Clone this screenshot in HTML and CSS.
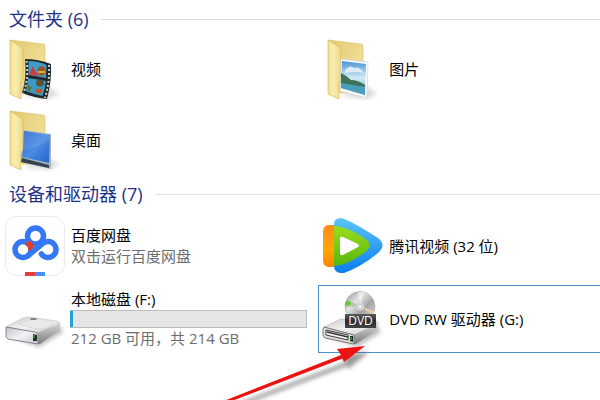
FILE: index.html
```html
<!DOCTYPE html>
<html lang="zh-CN">
<head>
  <meta charset="UTF-8">
  <title>这台电脑</title>
  <meta name="viewport" content="width=device-width, initial-scale=1.0">
  <link rel="stylesheet" href="styles.css">
</head>
<body>
  <!-- Shared gradients and the empty folder -->
  <svg class="defs" aria-hidden="true">
    <defs>
      <linearGradient id="flap" x1="0" y1="0" x2="1" y2="0">
        <stop offset="0" stop-color="#f1df8d"/>
        <stop offset="0.4" stop-color="#f9eeb2"/>
        <stop offset="1" stop-color="#ecd683"/>
      </linearGradient>
      <linearGradient id="back" x1="0" y1="0" x2="1" y2="1">
        <stop offset="0" stop-color="#e3c96f"/>
        <stop offset="1" stop-color="#f6e8aa"/>
      </linearGradient>
      <linearGradient id="sky" x1="0" y1="0" x2="0" y2="1">
        <stop offset="0" stop-color="#4a93d4"/>
        <stop offset="0.5" stop-color="#d3eaf5"/>
        <stop offset="1" stop-color="#57aacb"/>
      </linearGradient>
      <linearGradient id="screen" x1="0" y1="0" x2="1" y2="1">
        <stop offset="0" stop-color="#2d67c9"/>
        <stop offset="0.5" stop-color="#4a8be6"/>
        <stop offset="1" stop-color="#2463c4"/>
      </linearGradient>
      <linearGradient id="metalTop" x1="0" y1="0" x2="1" y2="1">
        <stop offset="0" stop-color="#c9c9c9"/>
        <stop offset="0.5" stop-color="#f3f3f3"/>
        <stop offset="1" stop-color="#c4c4c4"/>
      </linearGradient>
      <linearGradient id="metalSide" x1="0" y1="0" x2="0" y2="1">
        <stop offset="0" stop-color="#d8d8d8"/>
        <stop offset="1" stop-color="#7c7c7c"/>
      </linearGradient>
      <linearGradient id="metalFront" x1="0" y1="0" x2="1" y2="1">
        <stop offset="0" stop-color="#c2c3c8"/>
        <stop offset="0.5" stop-color="#f2f2f7"/>
        <stop offset="1" stop-color="#c5c5cf"/>
      </linearGradient>
      <linearGradient id="disc" x1="0" y1="0" x2="1" y2="1">
        <stop offset="0" stop-color="#8f8f8f"/>
        <stop offset="0.35" stop-color="#e4e4e4"/>
        <stop offset="0.6" stop-color="#a5a5a5"/>
        <stop offset="1" stop-color="#dddddd"/>
      </linearGradient>
      <linearGradient id="dvdLabel" x1="0" y1="0" x2="0" y2="1">
        <stop offset="0" stop-color="#5c5c5c"/>
        <stop offset="0.5" stop-color="#2c2c2c"/>
        <stop offset="1" stop-color="#444444"/>
      </linearGradient>
      <linearGradient id="playBlue" x1="0" y1="0" x2="0" y2="1">
        <stop offset="0" stop-color="#5cc4f5"/>
        <stop offset="1" stop-color="#0b7df0"/>
      </linearGradient>
      <linearGradient id="playGreen" x1="0" y1="0" x2="0" y2="1">
        <stop offset="0" stop-color="#9bdc1d"/>
        <stop offset="1" stop-color="#55b80c"/>
      </linearGradient>
      <linearGradient id="playOrange" x1="0" y1="0" x2="0" y2="1">
        <stop offset="0" stop-color="#ff8a1c"/>
        <stop offset="0.6" stop-color="#ffa600"/>
        <stop offset="1" stop-color="#ff8200"/>
      </linearGradient>
      <filter id="soft" x="-30%" y="-30%" width="160%" height="160%">
        <feGaussianBlur stdDeviation="2"/>
      </filter>
      <g id="folder">
        <path d="M20 59 L46 62 L56 57 L44 48 Z" fill="#888" opacity="0.3" filter="url(#soft)"/>
        <path d="M7 3 L40 7 Q42 7 42 9 L42 56 L19 56 Z" fill="url(#back)" stroke="#d9bf66" stroke-width="0.6"/>
        <path d="M7 3 L18 10 Q20 11 20 13 L20 42 L18 45 L18 62 L7 57 Z" fill="url(#flap)" stroke="#d2b658" stroke-width="0.6"/>
      </g>
    </defs>
  </svg>

  <section class="group">
    <h2 class="group-title">文件夹 (6)</h2>
    <ul class="tiles folders">
      <li class="tile">
        <svg class="icon" viewBox="0 0 64 64" aria-hidden="true">
          <use href="#folder"/>
          <path d="M22 22 Q35 22 48 27 Q49 43 44 62 Q32 61 19 56 Q24 40 22 22 Z" fill="#20282a"/>
          <path d="M25.500 24 Q35 24 43.500 28 L43 41 L25.500 38 Z" fill="#3f9ccb"/>
          <path d="M25 41 L43 44 Q42 52 39.500 59 Q30 57 22.500 54 Q25 47 25 41 Z" fill="#3c9ac9"/>
          <path d="M26 38 L28 33 L30 29 L32 34 L34 36 L35 39 Z" fill="#c9403a"/>
          <ellipse cx="38.500" cy="34" rx="4" ry="5" fill="#8f5a26"/>
          <path d="M35 34 H42 V36 H35 Z" fill="#e0a93a"/>
          <ellipse cx="37" cy="46" rx="4" ry="3.500" fill="#5e5230"/>
          <ellipse cx="36" cy="54" rx="3.500" ry="2.500" fill="#bd5a2d"/>
          <path d="M25 48 L29 50 L27 54 L24 53 Z" fill="#5a7a32"/>
          <path d="M23.500 24 Q26 40 20.500 56" fill="none" stroke="#c9d3cf" stroke-width="2" stroke-dasharray="2 2"/>
          <path d="M46 28 Q47 44 42 61" fill="none" stroke="#c9d3cf" stroke-width="2" stroke-dasharray="2 2"/>
        </svg>
        <span class="name">视频</span>
      </li>
      <li class="tile">
        <svg class="icon" viewBox="0 0 64 64" aria-hidden="true">
          <use href="#folder"/>
          <path d="M20 22 L47 25 L46 61 L19 54 Z" fill="#f8fbfd" stroke="#c3cbd0" stroke-width="0.6"/>
          <path d="M21 24 L45 27 L44 58 L20 51 Z" fill="url(#sky)"/>
          <path d="M24 33 Q29 27 33 31 Q38 29 43 36 Q35 34 24 36 Z" fill="#edf6fa" opacity="0.8"/>
          <path d="M20 36 Q26 39 30 43 Q37 43 44 48 L44 50 L20 47 Z" fill="#3d7457"/>
          <path d="M20 46 L44 50 L44 58 L20 51 Z" fill="#4b9dbe"/>
        </svg>
        <span class="name">图片</span>
      </li>
      <li class="tile">
        <svg class="icon" viewBox="0 0 64 64" aria-hidden="true">
          <use href="#folder"/>
          <path d="M20 22 L48 26 L48 61 L18 54 L18 45 L20 42 Z" fill="#a4b4bf"/>
          <path d="M21 23 L47 27 L46 55 L19 49 L20 42 Z" fill="url(#screen)"/>
          <path d="M19 50 L46 57 L46 60 L18 54 Z" fill="#344250"/>
          <path d="M21 23 L47 27 L47 32 Q34 40 20 42 Z" fill="#ffffff" opacity="0.1"/>
        </svg>
        <span class="name">桌面</span>
      </li>
    </ul>
  </section>

  <section class="group">
    <h2 class="group-title">设备和驱动器 (7)</h2>
    <ul class="tiles drives">
      <li class="tile">
        <svg class="icon" viewBox="0 0 64 64" aria-hidden="true">
          <rect x="2.500" y="2.500" width="59" height="59" rx="11" fill="#ffffff" stroke="#ebebeb"/>
          <g fill="none" stroke="#3478f6" stroke-width="5.500" stroke-linecap="round">
            <circle cx="20" cy="35.500" r="8"/>
            <path d="M23 28 A8 8 0 0 1 28 37" stroke="#d9402f" stroke-width="6" stroke-linecap="butt"/>
            <path d="M25.100 41.600 L39.900 29.400 A8 8 0 1 1 38.400 40"/>
            <circle cx="32.500" cy="22" r="8"/>
            <path d="M26 27.500 L29.500 33" stroke="#d9402f" stroke-width="4" stroke-linecap="butt"/>
          </g>
          <rect x="22" y="58" width="10" height="4" fill="#e23d36"/>
          <rect x="32" y="58" width="10" height="4" fill="#4b8df8"/>
        </svg>
        <div class="info">
          <span class="name">百度网盘</span>
          <span class="detail">双击运行百度网盘</span>
        </div>
      </li>
      <li class="tile">
        <svg class="icon" viewBox="0 0 64 64" aria-hidden="true">
          <path d="M13 11 L8 11 Q2 11 2 18 L2 46 Q2 53 8 53 L13 53 Z" fill="url(#playOrange)"/>
          <path d="M13 10 Q13 4 20 4 Q29 6 57 24 Q66 31 57 39 Q40 53 23 59 Q13 60 13 52 Z" fill="url(#playBlue)"/>
          <path d="M13 12 Q25 12 43 24 Q54 31 43 39 Q27 51 13 52 Z" fill="url(#playGreen)"/>
          <path d="M19 24 Q19 22 22 23 L37 30 Q39 32 37 33 L22 41 Q19 42 19 39 Z" fill="#ffffff"/>
        </svg>
        <span class="name">腾讯视频 (32 位)</span>
      </li>
      <li class="tile">
        <svg class="icon" viewBox="0 0 64 64" aria-hidden="true">
          <path d="M8 50 L36 60 L60 45 L54 36 Z" fill="#777" opacity="0.5" filter="url(#soft)"/>
          <path d="M3 40 L20 31 Q22 30 25 30 L53 34 Q57 35 57 37 L36 46 Z" fill="url(#metalTop)" stroke="#bdbdbd" stroke-width="0.6"/>
          <path d="M34 46 L57 36 L57 43 L37 57 L34 57 Z" fill="url(#metalSide)"/>
          <path d="M16 37 Q24 32 37 32 Q51 33 49 37 Q46 42 34 42 Z" fill="#e9e9e9" stroke="#cfcfcf" stroke-width="0.6"/>
          <path d="M28 31 L34 31 L33 33 L27 33 Z" fill="#858585"/>
          <path d="M3 40 L32 45 Q35 46 35 48 L35 57 L5 52 Q3 51 3 49 Z" fill="url(#metalFront)" stroke="#858585" stroke-width="1"/>
          <path d="M30 47 L34 48 L34 54 L30 54 Z" fill="#16351c"/>
          <path d="M31 48 V51" stroke="#55b945"/>
        </svg>
        <div class="info">
          <span class="name">本地磁盘 (F:)</span>
          <div class="usage"><div class="usage-fill" style="width: 1%"></div></div>
          <span class="detail">212 GB 可用，共 214 GB</span>
        </div>
      </li>
      <li class="tile selected">
        <svg class="icon" viewBox="0 0 64 64" aria-hidden="true">
          <path d="M8 50 L36 60 L60 45 L54 36 Z" fill="#777" opacity="0.5" filter="url(#soft)"/>
          <path d="M3 40 L20 32 L55 34 Q58 35 57 37 L34 48 Z" fill="url(#metalTop)" stroke="#a9a9a9" stroke-width="0.6"/>
          <path d="M33 48 L57 36 L56 43 L35 57 L33 57 Z" fill="url(#metalSide)"/>
          <path d="M3 40 L33 48 L33 57 L4 51 Q2 50 2 48 L2 42 Z" fill="#dedede" stroke="#777" stroke-width="1"/>
          <path d="M5 43 L27 48 L27 53 L5 48 Z" fill="#f7f7f7" stroke="#3b3b3b" stroke-width="1"/>
          <path d="M6 45 L27 50" stroke="#333" stroke-width="1.500"/>
          <path d="M29 49 L32 49 L32 55 L29 54 Z" fill="#16351c"/>
          <path d="M30 50 V53" stroke="#55b945"/>
          <circle cx="39" cy="19.500" r="15" fill="url(#disc)" stroke="#a3a3a3" stroke-width="0.6"/>
          <path d="M39 19.500 L26 12 Q24 16 24 20 Z" fill="#b4c9ac"/>
          <path d="M30 16 L26 13 Q24 15 24 19 L29 18 Z" fill="#69c832"/>
          <path d="M39 19.500 L53 24 L53 29 Z" fill="#e8cda5"/>
          <path d="M39 19.500 L37 5 L43 5 Z" fill="#f7f7f7" opacity="0.6"/>
          <circle cx="39" cy="19.500" r="4" fill="#d9d9d9"/>
          <circle cx="39" cy="19.500" r="2" fill="#ffffff" stroke="#aaa" stroke-width="0.6"/>
          <rect x="24" y="27" width="31" height="14" fill="url(#dvdLabel)"/>
          <text class="disc-label" x="39.500" y="38" text-anchor="middle">DVD</text>
        </svg>
        <span class="name">DVD RW 驱动器 (G:)</span>
      </li>
    </ul>

    <!-- Arrow pointing at the DVD drive -->
    <svg class="arrow" viewBox="0 0 150 64" aria-hidden="true">
      <path d="M-2 66 L124 18 L120 11 L147 8 L126 25 L125 22 L8 66 Z" fill="#555" opacity="0.6" filter="url(#soft)" transform="translate(2 4)"/>
      <path d="M-4 64 L121 15 L117 9 L145 6 L124 22 L122.500 18.500 L4 64 Z" fill="#ee1111"/>
    </svg>
  </section>
</body>
</html>
```

FILE: styles.css
```css
/* Base Styles */
body {
  box-sizing: border-box;
  min-height: 100vh;
  margin: 0;
  padding-top: 5px;
  overflow: hidden;
  background-color: #ffffff;
  color: #000000;
  font-family: "Open Sans", "Noto Sans CJK SC", sans-serif;
  font-size: 15px;
}
.defs {
  position: absolute;
  width: 0;
  height: 0;
}

/* Groups */
.group {
  position: relative;
}
.group-title {
  display: flex;
  align-items: center;
  gap: 12px;
  margin: 0;
  padding-left: 9px;
  color: #1e3287;
  font-size: 18px;
  font-weight: normal;
  line-height: 28px;
}
/* Rule that runs to the window edge */
.group-title::after {
  content: "";
  flex: 1;
  height: 1px;
  background-color: #e2e2e2;
}

/* Tiles */
.tiles {
  display: grid;
  grid-template-columns: 52% 1fr;
  grid-auto-rows: 68px;
  margin: 0 -12px 0 0;
  padding: 0;
  list-style: none;
}
.folders {
  row-gap: 3px;
  padding: 2px 0 6px;
}
.drives {
  row-gap: 5px;
  padding-top: 4px;
}
.tile {
  display: flex;
  align-items: center;
  gap: 4px;
  box-sizing: border-box;
  padding: 0 10px 0 2px;
  border: 1px solid transparent;
}
.selected {
  border-color: #4a90cf;
}
.icon {
  flex: none;
  width: 64px;
  height: 64px;
}
.info {
  flex: 1;
  display: flex;
  flex-direction: column;
}
.name,
.detail {
  line-height: 21px;
  white-space: nowrap;
}
.detail {
  color: #6d6d6d;
}
.disc-label {
  fill: #ffffff;
  font-family: "Open Sans", sans-serif;
  font-size: 12px;
}

/* Disk usage bar */
.usage {
  box-sizing: border-box;
  height: 18px;
  margin-left: -1px;
  border: 1px solid #bcbcbc;
  border-left: 0;
  background-color: #e6e6e6;
}
.usage-fill {
  min-width: 3px;
  height: 100%;
  background-color: #26a0da;
}

/* Arrow */
.arrow {
  position: absolute;
  top: 160px;
  left: 220px;
  width: 150px;
  height: 64px;
}
```
